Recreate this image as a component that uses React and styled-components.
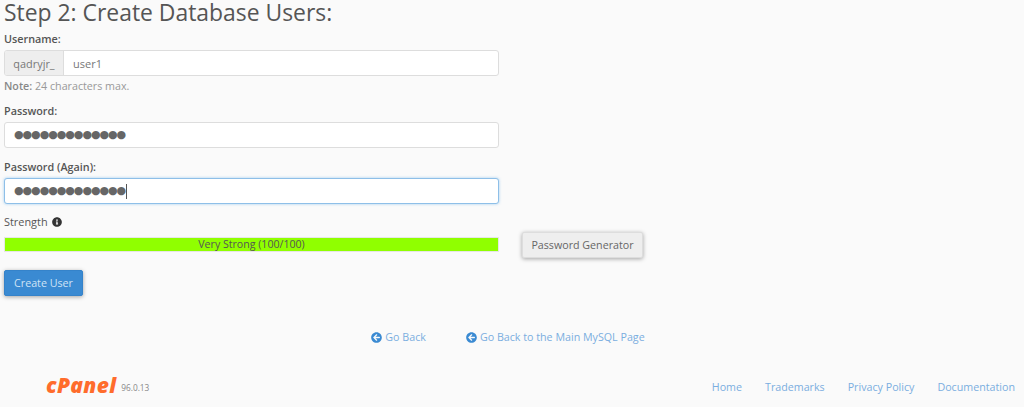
import React from 'react';
import styled, { createGlobalStyle } from 'styled-components';
import { FaArrowCircleLeft, FaInfoCircle } from 'react-icons/fa';

const GlobalStyle = createGlobalStyle`
  html, body {
    margin: 0;
    height: 100%;
    background: #fafafa;
    overflow: hidden;
  }
  body {
    font-family: "Open Sans", "Liberation Sans", sans-serif;
    font-size: 11px;
    color: #555;
  }
`

const Page = styled.div`
  height: 407px;
  display: flex;
  flex-direction: column;
  padding: 0 9px 0 4px;
  box-sizing: border-box;
`

const Title = styled.h2`
  margin: 0;
  font-size: 22.9px;
  line-height: 25px;
  font-weight: 400;
  color: #555;
`

const Form = styled.div`
  width: 495px;
`

const Field = styled.div`
  margin-top: ${(p) => p.$top}px;
`

const Label = styled.label`
  display: block;
  height: 18px;
  line-height: 18px;
  font-size: 10.8px;
  font-weight: 600;
  color: #555;
  margin-bottom: 2px;
`

const InputBox = styled.div`
  height: 26px;
  box-sizing: border-box;
  display: flex;
  align-items: center;
  background: #fff;
  border: 1px solid ${(p) => (p.$focused ? '#8ebfe8' : '#ddd')};
  border-radius: 3px;
  box-shadow: ${(p) => (p.$focused ? '0 0 3px rgba(102, 175, 233, 0.6)' : 'none')};
  overflow: hidden;
`

const Prefix = styled.span`
  width: 58px;
  height: 100%;
  flex: none;
  display: flex;
  align-items: center;
  justify-content: center;
  background: #eee;
  border-right: 1px solid #ddd;
  color: #777;
  font-size: 10.9px;
`

const Value = styled.span`
  padding-left: 9px;
  font-size: 11px;
  color: #777;
`

const Dots = styled.span`
  padding-left: 9px;
  font-family: "DejaVu Sans", sans-serif;
  font-size: 11px;
  letter-spacing: -1.05px;
  color: #666;
  line-height: 24px;
`

const Caret = styled.span`
  width: 1px;
  height: 15px;
  margin-left: 1px;
  background: #555;
`

const Note = styled.p`
  margin: 2px 0 0;
  line-height: 16px;
  font-size: 10.7px;
  color: #999;

  b {
    font-weight: 600;
    color: #888;
  }
`

const StrengthLabel = styled.div`
  height: 16px;
  line-height: 16px;
  display: flex;
  align-items: center;
  gap: 4px;
  font-size: 10.9px;
  color: #555;

  svg {
    width: 10px;
    height: 10px;
    color: #333;
  }
`

const StrengthRow = styled.div`
  display: flex;
  align-items: flex-start;
  gap: 23px;
  margin-top: 2px;
`

const Meter = styled.div`
  width: 495px;
  height: 15px;
  margin-top: 5px;
  box-sizing: border-box;
  background: #90ff00;
  border: 1px solid #e6e6e6;
  text-align: center;
  line-height: 13px;
  font-size: 10.6px;
  color: #555;
`

const Button = styled.button`
  font-family: inherit;
  font-size: 10.7px;
  border-radius: 2px;
  cursor: pointer;
  height: 26px;
  padding: 0;
  width: ${(p) => p.$width}px;
  color: ${(p) => (p.$primary ? '#cfe3f5' : '#666')};
  background: ${(p) => (p.$primary ? '#3a8ad2' : '#eee')};
  border: 1px solid ${(p) => (p.$primary ? '#3583ca' : '#ddd')};
  box-shadow: 0 1px 4px rgba(0, 0, 0, 0.35);
`

const ActionRow = styled.div`
  margin-top: 12px;
`

const BackLinks = styled.nav`
  display: flex;
  justify-content: center;
  gap: 40px;
  margin: 32px 3px 0 0;
  height: 18px;
  align-items: center;
`

const BackLink = styled.a`
  display: flex;
  align-items: center;
  gap: 3px;
  font-size: 10.7px;
  color: #7aaee0;
  text-decoration: none;

  svg {
    width: 11px;
    height: 11px;
    color: #3a8ad2;
  }
`

const Footer = styled.footer`
  display: flex;
  align-items: center;
  justify-content: space-between;
  margin-top: auto;
  height: 24px;
  margin-bottom: 8px;
  padding-left: 42px;
`

const Brand = styled.div`
  display: flex;
  align-items: center;
  gap: 5px;
`

const Logo = styled.span`
  font-weight: 800;
  font-style: italic;
  font-size: 21px;
  line-height: 24px;
  margin-top: -4px;
  letter-spacing: 0.3px;
  color: #ff6c2c;
`

const Version = styled.span`
  font-size: 8.3px;
  color: #888;
`

const FooterLinks = styled.nav`
  display: flex;
  gap: 23px;
`

const FooterLink = styled.a`
  font-size: 10.7px;
  color: #7aaee0;
  text-decoration: none;
`

const DOTS = '●●●●●●●●●●●●●'

function App() {
  return (
    <>
      <GlobalStyle />
      <Page>
        <Title>Step 2: Create Database Users:</Title>
        <Form>
          <Field $top={5}>
            <Label>Username:</Label>
            <InputBox>
              <Prefix>qadryjr_</Prefix>
              <Value>user1</Value>
            </InputBox>
            <Note><b>Note:</b> 24 characters max.</Note>
          </Field>
          <Field $top={8}>
            <Label>Password:</Label>
            <InputBox>
              <Dots>{DOTS}</Dots>
            </InputBox>
          </Field>
          <Field $top={10}>
            <Label>Password (Again):</Label>
            <InputBox $focused>
              <Dots>{DOTS}</Dots>
              <Caret />
            </InputBox>
          </Field>
        </Form>
        <Field $top={10}>
          <StrengthLabel>Strength <FaInfoCircle /></StrengthLabel>
          <StrengthRow>
            <Meter>Very Strong (100/100)</Meter>
            <Button $width={121}>Password Generator</Button>
          </StrengthRow>
        </Field>
        <ActionRow>
          <Button $primary $width={79}>Create User</Button>
        </ActionRow>
        <BackLinks>
          <BackLink href="#"><FaArrowCircleLeft /> Go Back</BackLink>
          <BackLink href="#"><FaArrowCircleLeft /> Go Back to the Main MySQL Page</BackLink>
        </BackLinks>
        <Footer>
          <Brand>
            <Logo>cPanel</Logo>
            <Version>96.0.13</Version>
          </Brand>
          <FooterLinks>
            <FooterLink href="#">Home</FooterLink>
            <FooterLink href="#">Trademarks</FooterLink>
            <FooterLink href="#">Privacy Policy</FooterLink>
            <FooterLink href="#">Documentation</FooterLink>
          </FooterLinks>
        </Footer>
      </Page>
    </>
  );
}

export default App
